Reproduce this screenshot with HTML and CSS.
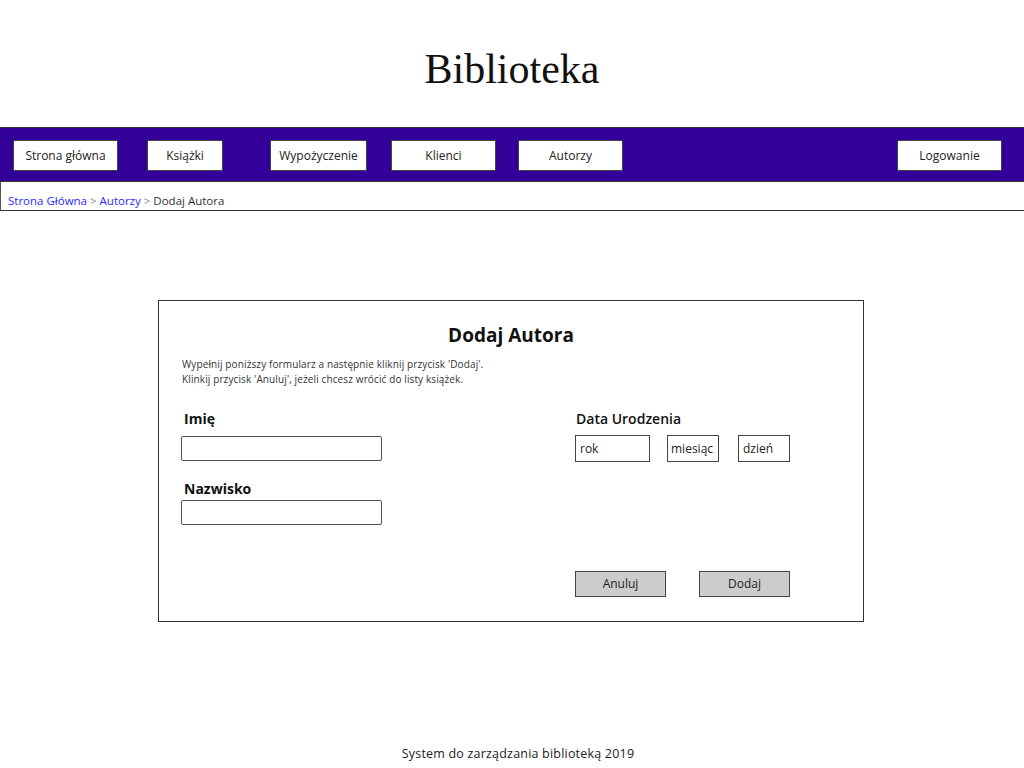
FILE: index.html
```html
<!DOCTYPE html>
<html lang="pl">
<head>
<meta charset="utf-8">
<title>Biblioteka</title>
<link rel="stylesheet" href="styles.css">
</head>
<body>
<h1 class="site-title">Biblioteka</h1>
<nav class="navbar">
  <a class="nav-btn nb-home">Strona główna</a>
  <a class="nav-btn nb-books">Książki</a>
  <a class="nav-btn nb-loans">Wypożyczenie</a>
  <a class="nav-btn nb-clients">Klienci</a>
  <a class="nav-btn nb-authors">Autorzy</a>
  <a class="nav-btn nb-login">Logowanie</a>
</nav>
<div class="breadcrumb">
  <a class="crumb-link">Strona Główna</a><span class="crumb-sep">&gt;</span><a class="crumb-link">Autorzy</a><span class="crumb-sep">&gt;</span><span class="crumb-current">Dodaj Autora</span>
</div>
<main class="card">
  <h2 class="card-title">Dodaj Autora</h2>
  <p class="card-desc">Wypełnij poniższy formularz a następnie kliknij przycisk 'Dodaj'.<br>Klinkij przycisk 'Anuluj', jeżeli chcesz wrócić do listy książek.</p>
  <div class="fields">
    <div class="col-left">
      <div class="label">Imię</div>
      <div class="input input-first"></div>
      <div class="label label-second">Nazwisko</div>
      <div class="input input-second"></div>
    </div>
    <div class="col-right">
      <div class="label">Data Urodzenia</div>
      <div class="date-row">
        <div class="date-box db-year">rok</div>
        <div class="date-box db-month">miesiąc</div>
        <div class="date-box db-day">dzień</div>
      </div>
      <div class="actions">
        <div class="btn btn-cancel">Anuluj</div>
        <div class="btn btn-add">Dodaj</div>
      </div>
    </div>
  </div>
</main>
<footer class="footer">System do zarządzania biblioteką 2019</footer>
</body>
</html>
```
FILE: styles.css
```css
html, body {
  margin: 0;
  padding: 0;
  background: #ffffff;
}
body {
  font-family: "Open Sans", "DejaVu Sans", sans-serif;
  color: #222222;
  width: 1024px;
  height: 768px;
  overflow: hidden;
}
.site-title {
  font-family: "Liberation Serif", "Times New Roman", serif;
  font-weight: normal;
  font-size: 42px;
  line-height: 48px;
  text-align: center;
  margin: 45px 0 34px 0;
  color: #111111;
}
.navbar {
  display: flex;
  align-items: flex-start;
  background: #330099;
  border-top: 1px solid #333333;
  border-bottom: 1px solid #333333;
  padding-top: 12px;
  box-sizing: border-box;
  height: 55px;
}
.nav-btn {
  display: flex;
  align-items: center;
  justify-content: center;
  height: 31px;
  box-sizing: border-box;
  background: #ffffff;
  border: 1px solid #444444;
  font-size: 12px;
  color: #222222;
}
.nb-home { margin-left: 13px; width: 105px; }
.nb-books { margin-left: 29px; width: 76px; }
.nb-loans { margin-left: 47px; width: 97px; }
.nb-clients { margin-left: 24px; width: 105px; }
.nb-authors { margin-left: 22px; width: 105px; }
.nb-login { margin-left: auto; margin-right: 22px; width: 105px; }
.breadcrumb {
  height: 29px;
  box-sizing: border-box;
  border-left: 1px solid #555555;
  border-bottom: 1px solid #333333;
  padding: 11px 0 0 7px;
  font-size: 11.5px;
  line-height: 16px;
  color: #333333;
}
.crumb-link { color: #2a2aff; }
.crumb-sep { color: #888888; margin: 0 3px; }
.card {
  display: block;
  width: 706px;
  height: 322px;
  box-sizing: border-box;
  margin: 89px 0 0 158px;
  border: 1px solid #333333;
}
.card-title {
  margin: 0;
  padding-top: 21px;
  font-size: 19px;
  line-height: 26px;
  font-weight: 700;
  text-align: center;
  color: #111111;
}
.card-desc {
  margin: 9px 0 0 0;
  padding-left: 23px;
  font-size: 10px;
  letter-spacing: 0.12px;
  line-height: 15px;
  color: #333333;
}
.fields {
  display: grid;
  grid-template-columns: 394px 230px;
  padding-left: 22px;
  margin-top: 22px;
}
.label {
  font-size: 14px;
  font-weight: 700;
  line-height: 20px;
  padding-left: 3px;
  color: #111111;
}
.label-second { margin-top: 18px; }
.input {
  width: 201px;
  height: 25px;
  box-sizing: border-box;
  border: 1px solid #555555;
  border-radius: 2px;
  background: #ffffff;
}
.input-first { margin-top: 7px; }
.input-second { margin-top: 1px; }
.col-right .label { padding-left: 1px; font-weight: 600; }
.date-row {
  display: flex;
  margin-top: 6px;
}
.date-box {
  height: 27px;
  box-sizing: border-box;
  border: 1px solid #444444;
  font-size: 12px;
  line-height: 25px;
  padding-left: 4px;
  color: #222222;
}
.db-year { width: 75px; }
.db-month { width: 52px; margin-left: 17px; padding-left: 3px; }
.db-day { width: 52px; margin-left: 19px; }
.actions {
  display: flex;
  margin-top: 109px;
}
.btn {
  height: 26px;
  box-sizing: border-box;
  width: 91px;
  border: 1px solid #444444;
  background: #cccccc;
  font-size: 12px;
  line-height: 24px;
  text-align: center;
  color: #222222;
}
.btn-add { margin-left: 33px; }
.footer {
  margin-top: 122px;
  text-align: center;
  padding-left: 12px;
  font-size: 12.5px;
  letter-spacing: 0.2px;
  line-height: 20px;
  color: #222222;
}
```
